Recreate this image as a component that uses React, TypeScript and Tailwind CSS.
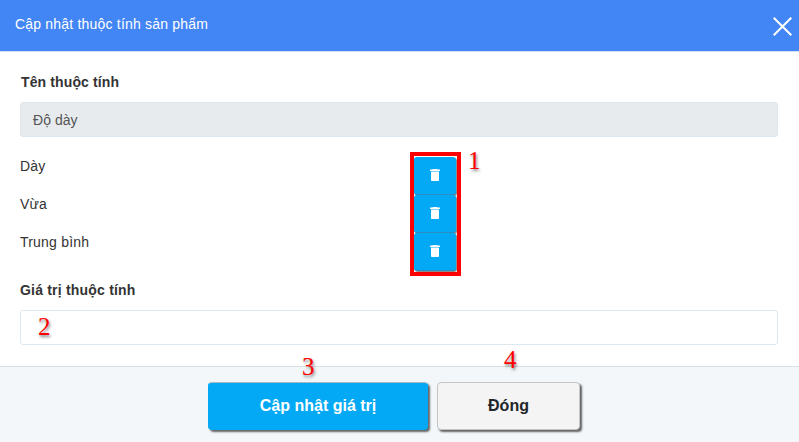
const attributeValues = ['Dày', 'Vừa', 'Trung bình'];

function TrashIcon() {
  return (
    <svg width="10" height="12" viewBox="0 0 10 12" fill="#fff" aria-hidden="true">
      <path d="M3 0h4l.6 .6H10v1.5H0V.6h2.4zM1 2.6h8V11c0 .6-.4 1-1 1H2c-.6 0-1-.4-1-1z" />
    </svg>
  );
}

function CloseIcon() {
  return (
    <svg width="19" height="19" viewBox="0 0 19 19" stroke="#fff" strokeWidth="2" aria-hidden="true">
      <path d="M.7 .7l17.6 17.6M18.3 .7L.7 18.3" />
    </svg>
  );
}

// Step numbers laid over the form
function Marker({ value, className }: { value: number; className: string }) {
  return (
    <span
      className={`absolute font-['Liberation_Serif',serif] text-[25px] leading-[24px] tracking-normal text-[#ff0000] [text-shadow:1px_2px_3px_rgba(0,0,0,0.5)] ${className}`}
    >
      {value}
    </span>
  );
}

export default function App() {
  return (
    <div className="relative flex h-[442px] w-[799px] flex-col overflow-hidden bg-white font-['Liberation_Sans',Arial,sans-serif] text-[14px] leading-[20px] tracking-[0.2px] text-[#333]">
      <header className="flex h-[52px] shrink-0 justify-between border-b border-[#d5e0f2] bg-[#4285f4] pl-[15px] text-white">
        <h1 className="pt-[14px]">Cập nhật thuộc tính sản phẩm</h1>
        <button className="mt-[17px] mr-[7px] h-[19px] w-[19px]" aria-label="Đóng">
          <CloseIcon />
        </button>
      </header>

      <main className="flex h-[314px] shrink-0 flex-col px-5 pt-5">
        <label className="pl-px font-bold tracking-[0.12px]">Tên thuộc tính</label>
        <div className="mt-[10px] mr-[1px] flex h-[35px] items-center rounded-[3px] border border-[#dee6ee] bg-[#e7ebee] px-3 tracking-[0.05px] text-[#555]">
          Độ dày
        </div>

        <div className="mt-[15px] flex h-[124px]">
          <ul className="w-[390px] pt-1">
            {attributeValues.map((value) => (
              <li key={value} className="h-[38px]">
                {value}
              </li>
            ))}
          </ul>
          <div className="w-[51px] border-4 border-[#ff0000] pt-px">
            {attributeValues.map((value) => (
              <button
                key={value}
                aria-label={`Xóa ${value}`}
                className="flex h-[38px] w-[42px] items-center justify-center rounded-[3px] border-b border-[#2a8fc0] bg-[#03a9f4] pb-px shadow-[1px_1px_1px_rgba(0,0,0,0.5)]"
              >
                <TrashIcon />
              </button>
            ))}
          </div>
        </div>

        <label className="mt-[4px] font-bold">Giá trị thuộc tính</label>
        <input
          type="text"
          className="mt-[10px] mr-[1px] h-[35px] rounded-[3px] border border-[#dee6ee] bg-white px-3"
        />
      </main>

      <footer className="flex flex-1 gap-[9px] border-t border-[#dadfe4] bg-[#f3f7fa] pt-[15px] pl-[208px] text-[16px] font-bold tracking-normal">
        <button className="h-[48px] w-[220px] rounded-[4px] border border-t-[#a8b8c2] border-x-[#03a9f4] border-b-[#03a9f4] bg-[#03a9f4] text-white shadow-[2px_2px_2px_rgba(0,0,0,0.6)]">
          Cập nhật giá trị
        </button>
        <button className="h-[48px] w-[143px] rounded-[4px] border border-[#c4c4c4] bg-[#f4f4f4] text-[#212529] shadow-[2px_2px_2px_rgba(0,0,0,0.6)]">
          Đóng
        </button>
      </footer>

      <Marker value={1} className="top-[149px] left-[468px]" />
      <Marker value={2} className="top-[315px] left-[38px]" />
      <Marker value={3} className="top-[355px] left-[302px]" />
      <Marker value={4} className="top-[348px] left-[504px]" />
    </div>
  );
}
